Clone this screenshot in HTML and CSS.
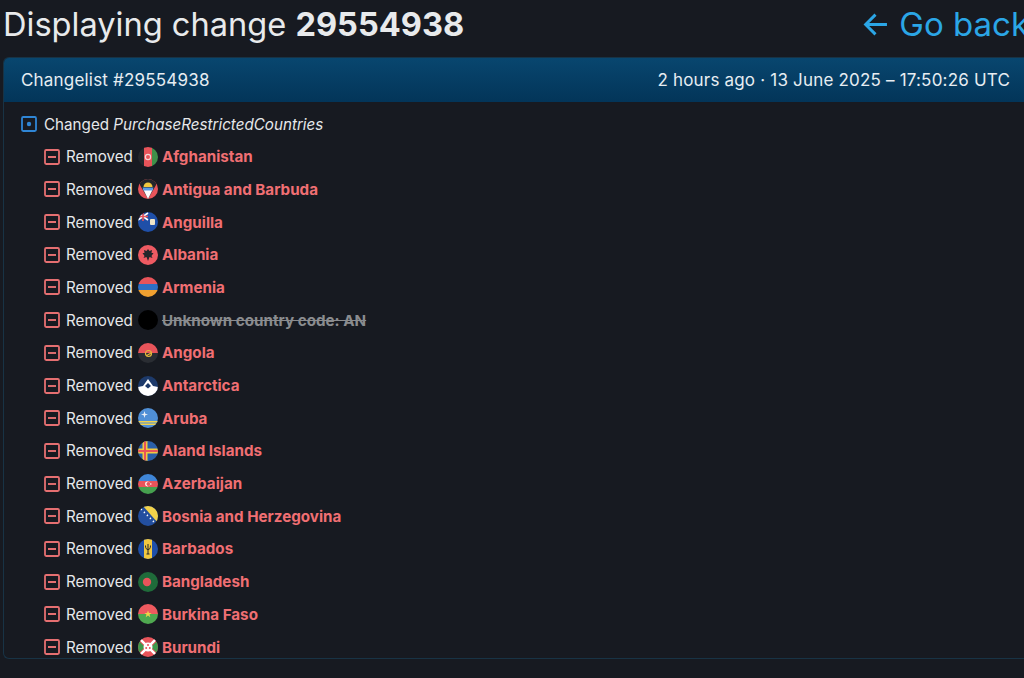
FILE: index.html
```html
<!DOCTYPE html>
<html lang="en">
<head>
<meta charset="utf-8">
<title>Displaying change 29554938</title>
<link rel="stylesheet" href="styles.css">
</head>
<body>
<svg class="defs" width="0" height="0" aria-hidden="true">
  <defs>
    <symbol id="minus" viewBox="0 0 16 16"><rect x="1" y="1" width="14" height="14" rx="1.2" fill="none" stroke="currentColor" stroke-width="1.8"/><path d="M4 8h8" stroke="currentColor" stroke-width="1.9"/></symbol>
  </defs>
</svg>
<div class="page">
  <header class="top">
    <h1 class="title">Displaying change <b>29554938</b></h1>
    <a class="back" href="#">
      <svg class="back-arrow" viewBox="0 0 24 24"><path d="M23 12H2.500M12 2.500L2.500 12l9.500 9.500" fill="none" stroke="currentColor" stroke-width="2.800"/></svg>
      <span>Go back</span>
    </a>
  </header>
  <section class="box">
    <div class="box-head">
      <span>Changelist #29554938</span>
      <span>2 hours ago · 13 June 2025 – 17:50:26 UTC</span>
    </div>
    <div class="box-body">
      <div class="row-top">
        <svg class="ico ico-blue" viewBox="0 0 16 16"><rect x="1" y="1" width="14" height="14" rx="1.2" fill="none" stroke="currentColor" stroke-width="1.8"/><circle cx="8" cy="8" r="2.200" fill="currentColor"/></svg>
        <span>Changed <i>PurchaseRestrictedCountries</i></span>
      </div>
      <ul class="list">
        <li class="row"><svg class="ico ico-red"><use href="#minus"/></svg><span class="verb">Removed</span>
          <svg class="flag" viewBox="0 0 20 20"><rect width="6" height="20" fill="#23262b"/><rect x="6" width="8" height="20" fill="#e8545a"/><rect x="14" width="6" height="20" fill="#3f8f49"/><circle cx="10" cy="10" r="2.600" fill="none" stroke="#f3d6d6" stroke-width="1.200"/></svg>
          <span class="name">Afghanistan</span></li>
        <li class="row"><svg class="ico ico-red"><use href="#minus"/></svg><span class="verb">Removed</span>
          <svg class="flag" viewBox="0 0 20 20"><rect width="20" height="20" fill="#e8545a"/><path d="M2 0h16v6L10 20 2 6z" fill="#23262b"/><path d="M5 10h10l-5 10z" fill="#fff"/><path d="M4.500 8.500h11l-1 3h-9z" fill="#5a9be6"/><path d="M5.500 8a4.500 4.500 0 019 0z" fill="#f2c83f"/></svg>
          <span class="name">Antigua and Barbuda</span></li>
        <li class="row"><svg class="ico ico-red"><use href="#minus"/></svg><span class="verb">Removed</span>
          <svg class="flag" viewBox="0 0 20 20"><rect width="20" height="20" fill="#1f4fa8"/><path d="M0 1l10 7M10 1L0 8" stroke="#fff" stroke-width="1.600"/><path d="M5 0v9M0 4.500h10" stroke="#e8545a" stroke-width="1.600"/><rect x="12" y="7" width="5" height="6" rx="1" fill="#f1e6c8"/></svg>
          <span class="name">Anguilla</span></li>
        <li class="row"><svg class="ico ico-red"><use href="#minus"/></svg><span class="verb">Removed</span>
          <svg class="flag" viewBox="0 0 20 20"><rect width="20" height="20" fill="#ee5a62"/><path d="M10 4l1.500 2 2.500-1-.5 3 2 0-2 3 1 2-3-1-1.500 4-1.500-4-3 1 1-2-2-3 2 0-.5-3 2.500 1z" fill="#23262b"/></svg>
          <span class="name">Albania</span></li>
        <li class="row"><svg class="ico ico-red"><use href="#minus"/></svg><span class="verb">Removed</span>
          <svg class="flag" viewBox="0 0 20 20"><rect width="20" height="7" fill="#e8545a"/><rect y="7" width="20" height="6" fill="#2f6fc4"/><rect y="13" width="20" height="7" fill="#f0a030"/></svg>
          <span class="name">Armenia</span></li>
        <li class="row"><svg class="ico ico-red"><use href="#minus"/></svg><span class="verb">Removed</span>
          <svg class="flag" viewBox="0 0 20 20"><rect width="20" height="20" fill="#000"/></svg>
          <span class="name name-unknown">Unknown country code: AN</span></li>
        <li class="row"><svg class="ico ico-red"><use href="#minus"/></svg><span class="verb">Removed</span>
          <svg class="flag" viewBox="0 0 20 20"><rect width="20" height="10" fill="#e8545a"/><rect y="10" width="20" height="10" fill="#2a2d33"/><circle cx="10.500" cy="10.500" r="3" fill="none" stroke="#e6b93a" stroke-width="1.200"/><path d="M8 13l5-3" stroke="#e6b93a" stroke-width="1.200"/></svg>
          <span class="name">Angola</span></li>
        <li class="row"><svg class="ico ico-red"><use href="#minus"/></svg><span class="verb">Removed</span>
          <svg class="flag" viewBox="0 0 20 20"><rect width="20" height="20" fill="#1d3a6b"/><path d="M0 11l5-1 5-7 5 7 5 1v9H0z" fill="#fff"/><path d="M7 10l3-3 3 3-3 2.500z" fill="#1d3a6b"/></svg>
          <span class="name">Antarctica</span></li>
        <li class="row"><svg class="ico ico-red"><use href="#minus"/></svg><span class="verb">Removed</span>
          <svg class="flag" viewBox="0 0 20 20"><rect width="20" height="20" fill="#4f8fd6"/><rect y="13" width="20" height="1.500" fill="#f2d24a"/><rect y="15.500" width="20" height="1.500" fill="#f2d24a"/><path d="M6.500 3l.8 2.700 2.700.8-2.700.8-.8 2.700-.8-2.700L3 6.500l2.700-.8z" fill="#e9eef5"/></svg>
          <span class="name">Aruba</span></li>
        <li class="row"><svg class="ico ico-red"><use href="#minus"/></svg><span class="verb">Removed</span>
          <svg class="flag" viewBox="0 0 20 20"><rect width="20" height="20" fill="#2a5fa8"/><path d="M7 0v20M0 10h20" stroke="#f2c83f" stroke-width="5"/><path d="M7 0v20M0 10h20" stroke="#e8545a" stroke-width="2"/></svg>
          <span class="name">Aland Islands</span></li>
        <li class="row"><svg class="ico ico-red"><use href="#minus"/></svg><span class="verb">Removed</span>
          <svg class="flag" viewBox="0 0 20 20"><rect width="20" height="7" fill="#3f86d8"/><rect y="7" width="20" height="6" fill="#e8545a"/><rect y="13" width="20" height="7" fill="#46a04f"/><circle cx="9.500" cy="10" r="2.400" fill="#fff"/><circle cx="10.300" cy="10" r="1.900" fill="#e8545a"/><circle cx="12.800" cy="10" r=".8" fill="#fff"/></svg>
          <span class="name">Azerbaijan</span></li>
        <li class="row"><svg class="ico ico-red"><use href="#minus"/></svg><span class="verb">Removed</span>
          <svg class="flag" viewBox="0 0 20 20"><rect width="20" height="20" fill="#234f9f"/><path d="M5 0h15v17z" fill="#f2d24a"/><path d="M3 3l.8.800M6 6l.8.800M9 9l.8.800M12 12l.8.800M15 15l.8.800" stroke="#fff" stroke-width="1.800"/></svg>
          <span class="name">Bosnia and Herzegovina</span></li>
        <li class="row"><svg class="ico ico-red"><use href="#minus"/></svg><span class="verb">Removed</span>
          <svg class="flag" viewBox="0 0 20 20"><rect width="20" height="20" fill="#1f4fa8"/><rect x="6" width="8" height="20" fill="#f2c83f"/><path d="M7.500 6.500c0 3 1 4 2.500 4s2.500-1 2.500-4M10 5v10M8.500 15h3" fill="none" stroke="#23262b" stroke-width="1"/></svg>
          <span class="name">Barbados</span></li>
        <li class="row"><svg class="ico ico-red"><use href="#minus"/></svg><span class="verb">Removed</span>
          <svg class="flag" viewBox="0 0 20 20"><rect width="20" height="20" fill="#1f6b3a"/><circle cx="9" cy="10" r="4.200" fill="#e8545a"/></svg>
          <span class="name">Bangladesh</span></li>
        <li class="row"><svg class="ico ico-red"><use href="#minus"/></svg><span class="verb">Removed</span>
          <svg class="flag" viewBox="0 0 20 20"><rect width="20" height="10" fill="#ee5a5f"/><rect y="10" width="20" height="10" fill="#4fa850"/><path d="M10 6.500l1 2.500h2.600l-2.100 1.600.8 2.600L10 11.600l-2.300 1.600.8-2.600L6.400 9H9z" fill="#f2d24a"/></svg>
          <span class="name">Burkina Faso</span></li>
        <li class="row"><svg class="ico ico-red"><use href="#minus"/></svg><span class="verb">Removed</span>
          <svg class="flag" viewBox="0 0 20 20"><rect width="20" height="20" fill="#e8545a"/><path d="M0 3l7 7-7 7zM20 3l-7 7 7 7z" fill="#3f9a4c"/><path d="M0 0l20 20M20 0L0 20" stroke="#fff" stroke-width="2.400"/><circle cx="10" cy="10" r="4.500" fill="#fff"/><circle cx="10" cy="8" r="1" fill="#e8545a"/><circle cx="8.200" cy="11" r="1" fill="#e8545a"/><circle cx="11.800" cy="11" r="1" fill="#e8545a"/></svg>
          <span class="name">Burundi</span></li>
      </ul>
    </div>
  </section>
</div>
</body>
</html>
```
FILE: styles.css
```css
* { box-sizing: border-box; }
html, body { margin: 0; padding: 0; height: 100%; overflow: hidden; }
body {
  background: #171a21;
  color: #e6e8ea;
  font-family: Inter, "Liberation Sans", sans-serif;
  font-size: 15.2px;
}
.defs { position: absolute; }
.page { width: 1024px; padding-left: 3px; overflow: hidden; }
.top {
  display: flex;
  justify-content: space-between;
  align-items: center;
  height: 57px;
  padding: 0 0 9px 0;
  white-space: nowrap;
}
.title { margin: 0; font-size: 32.6px; line-height: 48px; font-weight: 400; color: #e8eaec; }
.title b { font-weight: 700; }
.back {
  display: flex;
  align-items: center;
  gap: 11px;
  margin-right: -5px;
  color: #2ba6e6;
  font-size: 33px;
  line-height: 48px;
  text-decoration: none;
  flex: none;
}
.back-arrow { width: 25px; height: 25px; display: block; }
.box {
  height: 602px;
  border: 1px solid #183345;
  border-right: 0;
  border-radius: 6px 0 0 6px;
  overflow: hidden;
}
.box-head {
  display: flex;
  justify-content: space-between;
  align-items: center;
  height: 44px;
  padding: 0 14px 1px 17px;
  background: linear-gradient(180deg, #08466f 0%, #033559 100%);
  color: #e6edf2;
  font-size: 17px;
  letter-spacing: .19px;
}
.box-body { padding: 12px 0 0 17px; }
.row-top, .row { display: flex; align-items: center; height: 20px; white-space: nowrap; }
.row-top { gap: 7px; }
.ico { flex: none; width: 16px; height: 16px; display: block; }
.ico-blue { color: #2f86d6; }
.ico-red { color: #e56f71; }
.list {
  list-style: none;
  margin: 12.7px 0 0;
  padding: 0 0 0 23px;
  display: flex;
  flex-direction: column;
  gap: 12.7px;
}
.verb { margin-left: 6px; }
.flag { flex: none; width: 20px; height: 20px; margin: 0 4px 0 5px; border-radius: 50%; display: block; }
.name { font-weight: 700; color: #f06f73; }
.name-unknown { color: #8a8c8f; text-decoration: line-through; }
```
